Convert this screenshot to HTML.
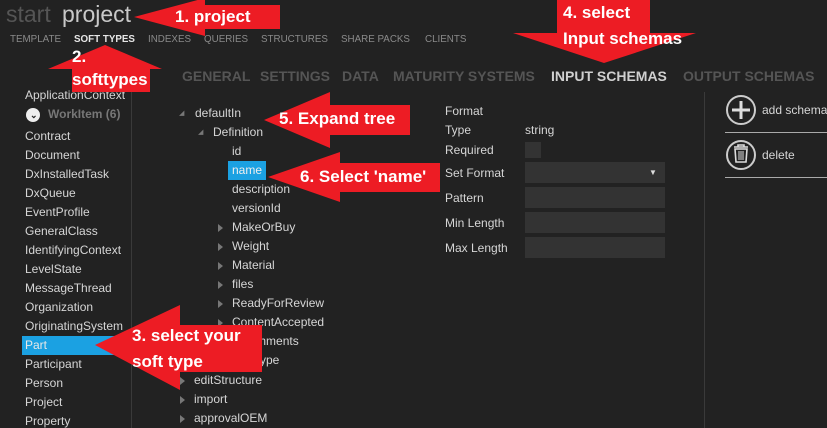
<!DOCTYPE html><html><head><style>
body{margin:0;width:827px;height:428px;background:#222222;overflow:hidden;position:relative;font-family:"Liberation Sans",sans-serif;color:#d6d6d6;font-size:12px}
.a{position:absolute;white-space:nowrap}
.s{left:25px}
.tab{position:absolute;top:34px;font-size:9.8px;color:#8a8a8a}
.sub{position:absolute;top:68px;font-size:14px;font-weight:bold;color:#555}
.box{position:absolute;left:525px;width:140px;height:21px;background:#333}
.tri{position:absolute;width:0;height:0;border-left:5px solid #777;border-top:4px solid transparent;border-bottom:4px solid transparent}
.lab{position:absolute;color:#fff;font-weight:bold;font-size:17px;white-space:nowrap}
</style></head><body>
<div class="a" style="left:6px;top:1px;font-size:23px;color:#555">start</div>
<div class="a" style="left:62px;top:1px;font-size:23px;color:#c8c8c8">project</div>
<div class="tab" style="left:10px">TEMPLATE</div>
<div class="tab" style="left:74px;color:#e6e6e6;font-weight:bold">SOFT TYPES</div>
<div class="tab" style="left:148px">INDEXES</div>
<div class="tab" style="left:204px">QUERIES</div>
<div class="tab" style="left:261px">STRUCTURES</div>
<div class="tab" style="left:341px">SHARE PACKS</div>
<div class="tab" style="left:425px">CLIENTS</div>
<div class="sub" style="left:182px">GENERAL</div>
<div class="sub" style="left:260px">SETTINGS</div>
<div class="sub" style="left:342px">DATA</div>
<div class="sub" style="left:393px">MATURITY SYSTEMS</div>
<div class="sub" style="left:551px;color:#d0d0d0">INPUT SCHEMAS</div>
<div class="sub" style="left:683px">OUTPUT SCHEMAS</div>
<div class="a" style="left:131px;top:92px;width:1px;height:336px;background:#3a3a3a"></div>
<div class="a" style="left:704px;top:92px;width:1px;height:336px;background:#3a3a3a"></div>
<div class="a" style="left:22px;top:336px;width:109px;height:19px;background:#1ba1e2"></div>
<div class="a s" style="top:88px">ApplicationContext</div>
<div class="a" style="left:26px;top:108px;width:14px;height:14px;border-radius:50%;background:#eee"></div>
<div class="a" style="left:30px;top:110px;font-size:9px;color:#222;font-weight:bold">&#8964;</div>
<div class="a" style="left:48px;top:107px;color:#777;font-weight:bold">WorkItem (6)</div>
<div class="a s" style="top:129px">Contract</div>
<div class="a s" style="top:148px">Document</div>
<div class="a s" style="top:167px">DxInstalledTask</div>
<div class="a s" style="top:186px">DxQueue</div>
<div class="a s" style="top:205px">EventProfile</div>
<div class="a s" style="top:224px">GeneralClass</div>
<div class="a s" style="top:243px">IdentifyingContext</div>
<div class="a s" style="top:262px">LevelState</div>
<div class="a s" style="top:281px">MessageThread</div>
<div class="a s" style="top:300px">Organization</div>
<div class="a s" style="top:319px">OriginatingSystem</div>
<div class="a s" style="top:338px;color:#e8e8e8">Part</div>
<div class="a s" style="top:357px">Participant</div>
<div class="a s" style="top:376px">Person</div>
<div class="a s" style="top:395px">Project</div>
<div class="a s" style="top:414px">Property</div>
<div class="a" style="left:179px;top:109px;font-size:7px;color:#777">&#9698;</div>
<div class="a" style="left:195px;top:106px">defaultIn</div>
<div class="a" style="left:198px;top:128px;font-size:7px;color:#777">&#9698;</div>
<div class="a" style="left:213px;top:125px">Definition</div>
<div class="a" style="left:232px;top:144px">id</div>
<div class="a" style="left:228px;top:161px;width:38px;height:19px;background:#1ba1e2"></div>
<div class="a" style="left:232px;top:163px;color:#eee">name</div>
<div class="a" style="left:232px;top:182px">description</div>
<div class="a" style="left:232px;top:201px">versionId</div>
<div class="tri" style="left:218px;top:224px"></div><div class="a" style="left:232px;top:220px">MakeOrBuy</div>
<div class="tri" style="left:218px;top:243px"></div><div class="a" style="left:232px;top:239px">Weight</div>
<div class="tri" style="left:218px;top:262px"></div><div class="a" style="left:232px;top:258px">Material</div>
<div class="tri" style="left:218px;top:281px"></div><div class="a" style="left:232px;top:277px">files</div>
<div class="tri" style="left:218px;top:300px"></div><div class="a" style="left:232px;top:296px">ReadyForReview</div>
<div class="tri" style="left:218px;top:319px"></div><div class="a" style="left:232px;top:315px">ContentAccepted</div>
<div class="a" style="left:232px;top:334px">Attachments</div>
<div class="a" style="left:232px;top:353px">DocType</div>
<div class="tri" style="left:180px;top:377px"></div><div class="a" style="left:194px;top:373px">editStructure</div>
<div class="tri" style="left:180px;top:396px"></div><div class="a" style="left:194px;top:392px">import</div>
<div class="tri" style="left:180px;top:415px"></div><div class="a" style="left:194px;top:411px">approvalOEM</div>
<div class="a" style="left:445px;top:104px">Format</div>
<div class="a" style="left:445px;top:123px">Type</div>
<div class="a" style="left:525px;top:123px">string</div>
<div class="a" style="left:445px;top:143px">Required</div>
<div class="a" style="left:525px;top:142px;width:16px;height:16px;background:#333"></div>
<div class="a" style="left:445px;top:166px">Set Format</div>
<div class="box" style="top:162px"></div>
<div class="a" style="left:649px;top:168px;font-size:8px;color:#ddd">&#9660;</div>
<div class="a" style="left:445px;top:191px">Pattern</div><div class="box" style="top:187px"></div>
<div class="a" style="left:445px;top:216px">Min Length</div><div class="box" style="top:212px"></div>
<div class="a" style="left:445px;top:241px">Max Length</div><div class="box" style="top:237px"></div>
<svg class="a" style="left:724px;top:93px" width="36" height="80">
<circle cx="17" cy="17" r="14" fill="none" stroke="#ccc" stroke-width="2"/>
<path d="M17 8v18M8 17h18" stroke="#ddd" stroke-width="3"/>
<circle cx="17" cy="62" r="14" fill="none" stroke="#ccc" stroke-width="2"/>
<path d="M10 54h14M14 54v-2h6v2M11 56h12l-1 13h-10z" fill="none" stroke="#ddd" stroke-width="1.6"/>
<path d="M15 58v9M17 58v9M19 58v9" stroke="#ddd"/>
</svg>
<div class="a" style="left:762px;top:103px">add schema</div>
<div class="a" style="left:725px;top:132px;width:102px;height:1px;background:#aaa"></div>
<div class="a" style="left:762px;top:148px">delete</div>
<div class="a" style="left:725px;top:177px;width:102px;height:1px;background:#aaa"></div>
<svg class="a" style="left:0;top:0" width="827" height="428">
<g fill="#ed1c24">
<polygon points="134,17 205,-2 205,5 280,5 280,29 205,29 205,36"/>
<polygon points="105,45 162,69 150,69 150,92 72,92 72,69 48,69"/>
<polygon points="557,0 650,0 650,33 696,33 604,63 513,33 557,33"/>
<polygon points="95,345 180,305 180,325 262,325 262,372 180,372 180,390"/>
<polygon points="264,120 330,92 330,105 410,105 410,135 330,135 330,148"/>
<polygon points="268,177 340,152 340,163 440,163 440,192 340,192 340,202"/>
</g></svg>
<div class="lab" style="left:175px;top:7px">1. project</div>
<div class="lab" style="left:72px;top:47px">2.</div>
<div class="lab" style="left:72px;top:70px">softtypes</div>
<div class="lab" style="left:563px;top:3px">4. select</div>
<div class="lab" style="left:563px;top:29px">Input schemas</div>
<div class="lab" style="left:132px;top:326px">3. select your</div>
<div class="lab" style="left:132px;top:352px">soft type</div>
<div class="lab" style="left:279px;top:109px">5. Expand tree</div>
<div class="lab" style="left:300px;top:167px">6. Select 'name'</div>
</body></html>
